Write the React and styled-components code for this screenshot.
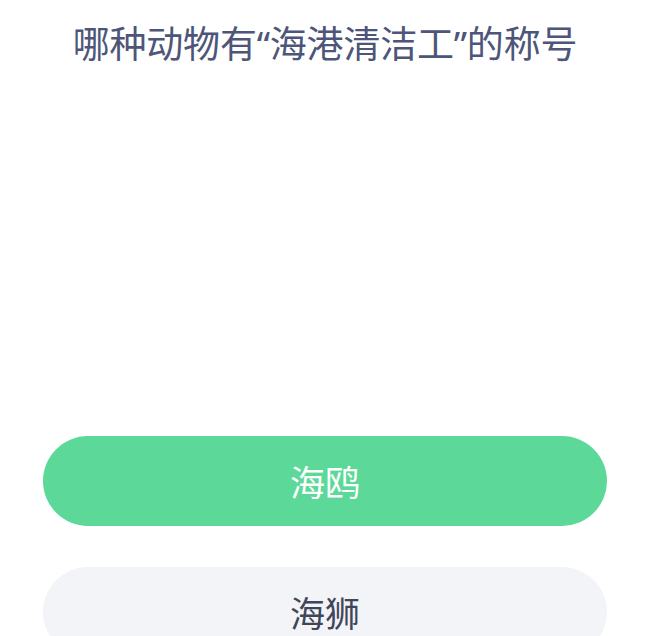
import React from "react";
import styled, { createGlobalStyle } from "styled-components";

const GlobalStyle = createGlobalStyle`
  html, body {
    margin: 0;
    padding: 0;
    background: #ffffff;
    font-family: "Noto Sans CJK SC", "Noto Sans", sans-serif;
  }
  body {
    overflow: hidden;
  }
`;

const options = [
  { label: "海鸥", active: true },
  { label: "海狮", active: false },
];

export default function App() {
  return (
    <>
      <GlobalStyle />
      <Page>
        <Question>哪种动物有“海港清洁工”的称号</Question>
        <Options>
          {options.map((option) => (
            <OptionButton key={option.label} $active={option.active}>
              {option.label}
            </OptionButton>
          ))}
        </Options>
      </Page>
    </>
  );
}

const Page = styled.div`
  width: 657px;
  height: 636px;
  display: flex;
  flex-direction: column;
  align-items: center;
  padding: 0 50px 0 43px;
  box-sizing: border-box;
  overflow: hidden;
`;

const Question = styled.h1`
  margin: 17px 0 0;
  width: 100%;
  text-align: center;
  font-family: "Noto Sans", "Noto Sans CJK SC", sans-serif;
  font-size: 37px;
  line-height: 54px;
  font-weight: 400;
  color: #4d5679;
  letter-spacing: -0.2px;
`;

const Options = styled.div`
  width: 100%;
  margin-top: 365px;
  display: flex;
  flex-direction: column;
  gap: 41px;
`;

const OptionButton = styled.div`
  height: 90px;
  border-radius: 45px;
  display: flex;
  align-items: center;
  justify-content: center;
  font-size: 35px;
  padding-bottom: 2px;
  box-sizing: border-box;
  background: ${(p) => (p.$active ? "#5cd998" : "#f3f4f7")};
  color: ${(p) => (p.$active ? "#ffffff" : "#3f465a")};
  flex-shrink: 0;
`;
